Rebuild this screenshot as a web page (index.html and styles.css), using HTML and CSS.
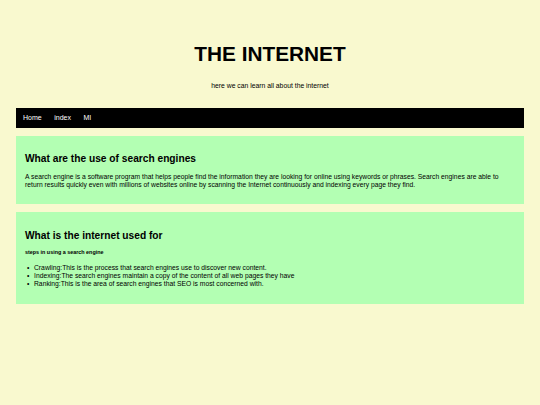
FILE: index.html
```html
<!DOCTYPE html>
<html>
<head>
<meta charset="utf-8">
<link rel="stylesheet" href="styles.css">
</head>
<body>
<header class="header">
  <h1 class="title">THE INTERNET</h1>
  <p class="subtitle">here we can learn all about the internet</p>
</header>
<nav class="nav">
  <a class="nav-link" href="#">Home</a>
  <a class="nav-link" href="#">index</a>
  <a class="nav-link" href="#">MI</a>
</nav>
<section class="card card-one">
  <h2 class="card-title">What are the use of search engines</h2>
  <p class="card-text">A search engine is a software program that helps people find the information they are looking for online using keywords or phrases. Search engines are able to return results quickly even with millions of websites online by scanning the Internet continuously and indexing every page they find.</p>
</section>
<section class="card card-two">
  <h2 class="card-title">What is the internet used for</h2>
  <h4 class="card-sub">steps in using a search engine</h4>
  <ul class="card-list">
    <li class="card-item">Crawling:This is the process that search engines use to discover new content.</li>
    <li class="card-item">Indexing:The search engines maintain a copy of the content of all web pages they have</li>
    <li class="card-item">Ranking:This is the area of search engines that SEO is most concerned with.</li>
  </ul>
</section>
</body>
</html>
```
FILE: styles.css
```css
html, body {
  margin: 0;
  padding: 0;
}
body {
  background: #f9f9cf;
  font-family: "Liberation Sans", Arial, sans-serif;
  color: #000;
  padding: 0 16px;
  height: 405px;
  box-sizing: border-box;
  overflow: hidden;
}
.header {
  padding-top: 42px;
  text-align: center;
}
.title {
  margin: 0;
  font-size: 20.8px;
  line-height: 24px;
  font-weight: bold;
}
.subtitle {
  margin: 16px 0 0;
  font-size: 6.8px;
  line-height: 8px;
}
.nav {
  margin-top: 18px;
  height: 20px;
  background: #000;
  display: flex;
  align-items: center;
  padding-left: 7px;
  gap: 12.5px;
}
.nav-link {
  color: #fff;
  text-decoration: none;
  font-size: 7px;
  line-height: 8px;
}
.card {
  background: #b3ffb3;
  padding: 0 9px;
  margin-top: 8px;
  overflow: hidden;
}
.card-one {
  height: 68px;
}
.card-two {
  height: 92px;
}
.card-title {
  margin: 16px 0 0;
  font-size: 10.2px;
  line-height: 13px;
  font-weight: bold;
}
.card-text {
  margin: 8px 0 0;
  font-size: 6.75px;
  line-height: 8px;
}
.card-two .card-title {
  margin-top: 17px;
}
.card-sub {
  margin: 7px 0 0;
  font-size: 5.4px;
  line-height: 7px;
  font-weight: bold;
}
.card-list {
  list-style: none;
  margin: 8px 0 0;
  padding: 0;
  font-size: 6.75px;
  line-height: 8px;
}
.card-item {
  display: flex;
}
.card-item::before {
  content: "\2022";
  width: 9px;
  padding-left: 2px;
  box-sizing: border-box;
  flex: none;
}
```
